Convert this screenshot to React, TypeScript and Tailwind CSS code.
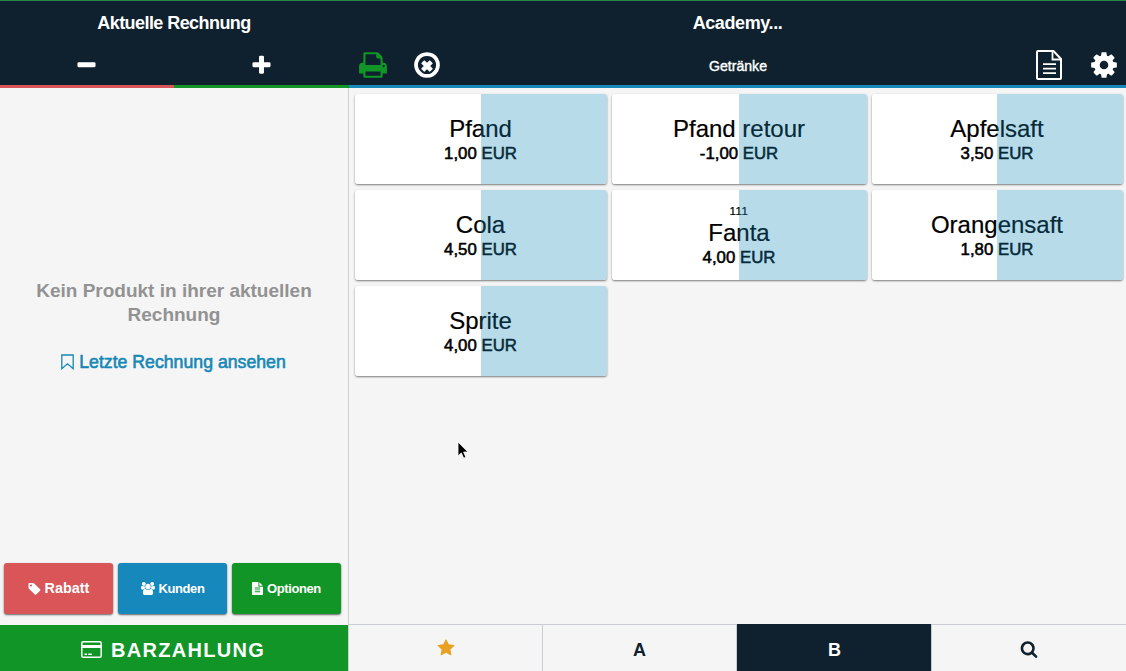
import React from 'react';

interface Product {
    id: number;
    name: string;
    price: string;
    code?: string;
}

const PRODUCTS: Product[] = [
    { id: 1, name: 'Pfand', price: '1,00 EUR' },
    { id: 2, name: 'Pfand retour', price: '-1,00 EUR' },
    { id: 3, name: 'Apfelsaft', price: '3,50 EUR' },
    { id: 4, name: 'Cola', price: '4,50 EUR' },
    { id: 5, name: 'Fanta', price: '4,00 EUR', code: '111' },
    { id: 6, name: 'Orangensaft', price: '1,80 EUR' },
    { id: 7, name: 'Sprite', price: '4,00 EUR' },
];

const PATHS = {
    minus: 'M1600 736v192q0 40-28 68t-68 28h-1216q-40 0-68-28t-28-68v-192q0-40 28-68t68-28h1216q40 0 68 28t28 68z',
    plus: 'M1600 736v192q0 40-28 68t-68 28h-416v416q0 40-28 68t-68 28h-192q-40 0-68-28t-28-68v-416h-416q-40 0-68-28t-28-68v-192q0-40 28-68t68-28h416v-416q0-40 28-68t68-28h192q40 0 68 28t28 68v416h416q40 0 68 28t28 68z',
    print: 'M448 1536h896v-256h-896v256zm0-640h896v-384h-160q-40 0-68-28t-28-68v-160h-640v640zm1152 64q0-26-19-45t-45-19-45 19-19 45 19 45 45 19 45-19 19-45zm128 0v416q0 13-9.5 22.5t-22.5 9.5h-224v160q0 40-28 68t-68 28h-960q-40 0-68-28t-28-68v-160h-224q-13 0-22.5-9.5t-9.5-22.5v-416q0-79 56.5-135.5t135.5-56.5h64v-544q0-40 28-68t68-28h672q40 0 88 20t76 48l152 152q28 28 48 76t20 88v256h64q79 0 135.5 56.5t56.5 135.5z',
    cancel: 'M1225 1143l-146 146q-10 10-23 10t-23-10l-137-137-137 137q-10 10-23 10t-23-10l-146-146q-10-10-10-23t10-23l137-137-137-137q-10-10-10-23t10-23l146-146q10-10 23-10t23 10l137 137 137-137q10-10 23-10t23 10l146 146q10 10 10 23t-10 23l-137 137 137 137q10 10 10 23t-10 23zm215-247q0-148-73-273t-198-198-273-73-273 73-198 198-73 273 73 273 198 198 273 73 273-73 198-198 73-273zm224 0q0 209-103 385.5t-279.5 279.5-385.5 103-385.5-103-279.5-279.5-103-385.5 103-385.5 279.5-279.5 385.5-103 385.5 103 279.5 279.5 103 385.5z',
    cog: 'M1152 896q0-106-75-181t-181-75-181 75-75 181 75 181 181 75 181-75 75-181zm512-109v222q0 12-8 23t-20 13l-185 28q-19 54-39 91 35 50 107 138 10 12 10 25t-9 23q-27 37-99 108t-94 71q-12 0-26-9l-138-108q-44 23-91 38-16 136-29 186-7 28-36 28h-222q-14 0-24.5-8.5t-11.5-21.5l-28-184q-49-16-90-37l-141 107q-10 9-25 9-14 0-25-11-126-114-165-168-7-10-7-23 0-12 8-23 15-21 51-66.5t54-70.5q-27-50-41-99l-183-27q-13-2-21-12.5t-8-23.5v-222q0-12 8-23t19-13l186-28q14-46 39-92-40-57-107-138-10-12-10-24 0-10 9-23 26-36 98.5-107.5t94.5-71.5q13 0 26 10l138 107q44-23 91-38 16-136 29-186 7-28 36-28h222q14 0 24.5 8.5t11.5 21.5l28 184q49 16 90 37l142-107q9-9 24-9 13 0 25 10 129 119 165 170 7 8 7 22 0 12-8 23-15 21-51 66.5t-54 70.5q26 50 41 98l183 28q13 2 21 12.5t8 23.5z',
    search: 'M1216 832q0-185-131.5-316.5t-316.5-131.5-316.5 131.5-131.5 316.5 131.5 316.5 316.5 131.5 316.5-131.5 131.5-316.5zm512 832q0 52-38 90t-90 38q-54 0-90-38l-343-342q-179 124-399 124-143 0-273.5-55.5t-225-150-150-225-55.5-273.5 55.5-273.5 150-225 225-150 273.5-55.5 273.5 55.5 225 150 150 225 55.5 273.5q0 220-124 399l343 343q37 37 37 90z',
    star: 'M1728 647q0 22-26 48l-363 354 86 500q1 7 1 20 0 21-10.5 35.5t-30.5 14.5q-19 0-40-12l-449-236-449 236q-22 12-40 12-21 0-31.5-14.5t-10.5-35.5q0-6 2-20l86-500-364-354q-25-27-25-48 0-37 56-46l502-73 225-455q19-41 49-41t49 41l225 455 502 73q56 9 56 46z',
    tag: 'M576 448q0-53-37.5-90.5t-90.5-37.5-90.5 37.5-37.5 90.5 37.5 90.5 90.5 37.5 90.5-37.5 37.5-90.5zm1067 576q0 53-37 90l-491 492q-39 37-91 37-53 0-90-37l-715-716q-38-37-64.5-101t-26.5-117v-416q0-52 38-90t90-38h416q53 0 117 26.5t102 64.5l715 714q37 39 37 91z',
    users: 'M657 896q-162 5-265 128h-134q-82 0-138-40.5t-56-118.5q0-353 124-353 6 0 43.5 21t97.5 42.5 119 21.5q67 0 133-23-5 37-5 66 0 139 81 256zm1071 637q0 120-73 189.5t-194 69.5h-874q-121 0-194-69.5t-73-189.5q0-53 3.5-103.5t14-109 26.5-108.5 43-97.5 62-81 85.5-53.5 111.5-20q10 0 43 21.5t73 48 107 48 135 21.5 135-21.5 107-48 73-48 43-21.5q61 0 111.5 20t85.5 53.5 62 81 43 97.5 26.5 108.5 14 109 3.5 103.5zm-1024-1277q0 106-75 181t-181 75-181-75-75-181 75-181 181-75 181 75 75 181zm704 384q0 159-112.5 271.5t-271.5 112.5-271.5-112.5-112.5-271.5 112.5-271.5 271.5-112.5 271.5 112.5 112.5 271.5zm576 225q0 78-56 118.5t-138 40.5h-134q-103-123-265-128 81-117 81-256 0-29-5-66 66 23 133 23 59 0 119-21.5t97.5-42.5 43.5-21q124 0 124 353zm-128-609q0 106-75 181t-181 75-181-75-75-181 75-181 181-75 181 75 75 181z',
    file: 'M1596 476q14 14 28 36h-472v-472q22 14 36 28zm-476 164h544v1056q0 40-28 68t-68 28h-1344q-40 0-68-28t-28-68v-1600q0-40 28-68t68-28h800v544q0 40 28 68t68 28zm160 736v-64q0-14-9-23t-23-9h-704q-14 0-23 9t-9 23v64q0 14 9 23t23 9h704q14 0 23-9t9-23zm0-256v-64q0-14-9-23t-23-9h-704q-14 0-23 9t-9 23v64q0 14 9 23t23 9h704q14 0 23-9t9-23zm0-256v-64q0-14-9-23t-23-9h-704q-14 0-23 9t-9 23v64q0 14 9 23t23 9h704q14 0 23-9t9-23z',
};

interface IconProps {
    name: keyof typeof PATHS;
    className?: string;
    viewBox?: string;
}

const Icon: React.FC<IconProps> = ({ name, className, viewBox = '0 0 1792 1792' }) => (
    <svg viewBox={viewBox} className={className} fill="currentColor" aria-hidden="true">
        <path d={PATHS[name]} />
    </svg>
);

const ReceiptIcon = () => (
    <svg width="28" height="32" viewBox="0 0 28 32" fill="none" stroke="currentColor" aria-hidden="true">
        <path d="M3 2h15.500l7.500 8v19a1 1 0 0 1-1 1H3a1 1 0 0 1-1-1V3a1 1 0 0 1 1-1z" strokeWidth="2" />
        <path d="M17.500 2v8.500H26" strokeWidth="1.800" />
        <path d="M8 15.200h13M8 19.700h13M8 24.200h13" strokeWidth="1.800" />
    </svg>
);

const BookmarkIcon = () => (
    <svg width="13" height="16" viewBox="0 0 13 16" fill="none" stroke="currentColor" strokeWidth="1.300" aria-hidden="true">
        <path d="M.8 1h11.400v13.700L6.500 9.800.8 14.700z" />
    </svg>
);

const CardIcon = () => (
    <svg width="21" height="17" viewBox="0 0 21 17" fill="none" stroke="currentColor" aria-hidden="true">
        <rect x=".8" y=".8" width="19.400" height="15.400" rx="1.500" strokeWidth="1.500" />
        <path d="M1 5.500h19" strokeWidth="3" />
        <path d="M3.500 13.300h2.500M7.200 13.300h3.600" strokeWidth="1.400" />
    </svg>
);

const ProductTile: React.FC<{ product: Product }> = ({ product }) => (
    <button className="relative flex flex-col items-center justify-center overflow-hidden rounded-[3px] bg-white pt-px pr-px text-black">
        {product.code && <span className="text-[11.5px] leading-[15px] tracking-[0.5px] [-webkit-text-stroke:0.2px]">{product.code}</span>}
        <span className="text-[24px] leading-[28px] [-webkit-text-stroke:0.2px]">{product.name}</span>
        <span className="text-[16.8px] leading-[21px] [-webkit-text-stroke:0.55px]">{product.price}</span>
        {/* stock level */}
        <span className="absolute inset-y-0 right-0 w-[calc(50%+0.4px)] bg-[#1488bb]/30" />
    </button>
);

export default function App() {
    return (
        <div className="relative flex h-[671px] w-[1126px] overflow-hidden bg-[#f5f5f5] font-['Liberation_Sans',Arial,sans-serif] text-[#0f212e]">
            {/* Current bill */}
            <aside className="flex w-[349px] flex-col">
                <header className="flex h-[88px] flex-col border-t border-[#2a8748] bg-[#0f212e] text-white">
                    <h1 className="h-11 pr-px text-center text-[18px] leading-[44px] font-bold tracking-[-0.57px]">Aktuelle Rechnung</h1>
                    <div className="flex flex-1">
                        <button className="flex w-[174px] items-center justify-center border-b-[3px] border-[#d95459] pr-px">
                            <Icon name="minus" className="h-[23px] w-[23px]" />
                        </button>
                        <button className="flex flex-1 items-center justify-center border-b-[3px] border-[#109526]">
                            <Icon name="plus" className="h-[23px] w-[23px]" />
                        </button>
                    </div>
                </header>

                <div className="flex flex-1 flex-col border-r border-[#cdd0d3]">
                    <div className="flex flex-1 flex-col items-center pt-[191px]">
                        <p className="w-[300px] text-center text-[19px] leading-6 font-bold text-[#929292]">Kein Produkt in ihrer aktuellen Rechnung</p>
                        <a className="mt-[23px] flex items-center gap-[5px] pr-px text-[17.7px] leading-6 text-[#1788b5] [-webkit-text-stroke:0.6px]">
                            <BookmarkIcon />
                            Letzte Rechnung ansehen
                        </a>
                    </div>
                    <div className="flex gap-[5px] px-1 pb-[11px] text-white">
                        <button className="flex h-[51px] w-[109px] items-center justify-center gap-1 rounded-[3px] bg-[#d95557] text-[14.4px] font-bold shadow-[0_1px_2px_rgba(0,0,0,0.6)]">
                            <Icon name="tag" className="h-[14px] w-[13px]" viewBox="64 0 1664 1792" />
                            Rabatt
                        </button>
                        <button className="flex h-[51px] w-[109px] items-center justify-center gap-1 rounded-[3px] bg-[#1788bb] text-[13px] font-bold tracking-[-0.4px] shadow-[0_1px_2px_rgba(0,0,0,0.6)]">
                            <Icon name="users" className="h-[13px] w-[14px]" viewBox="64 0 1920 1792" />
                            Kunden
                        </button>
                        <button className="flex h-[51px] w-[109px] items-center justify-center gap-1 rounded-[3px] bg-[#109526] text-[13px] font-bold tracking-[-0.4px] shadow-[0_1px_2px_rgba(0,0,0,0.6)]">
                            <Icon name="file" className="h-[13px] w-[11px]" viewBox="128 0 1536 1792" />
                            Optionen
                        </button>
                    </div>
                    <button className="flex h-[46px] items-center justify-center gap-[9px] bg-[#109526] pt-[3px] pr-[2px] text-[20px] font-bold tracking-[1.3px] text-white">
                        <CardIcon />
                        BARZAHLUNG
                    </button>
                </div>
            </aside>

            {/* Products */}
            <main className="flex flex-1 flex-col">
                <header className="flex h-[88px] flex-col border-t border-b-[3px] border-t-[#2a8748] border-b-[#1788bb] bg-[#0f212e] text-white">
                    <h2 className="h-11 text-center text-[18px] leading-[44px] font-bold tracking-[-0.4px]">Academy...</h2>
                    <div className="flex flex-1 items-center justify-between pr-[7px] pl-[9px]">
                        <div className="flex w-[100px] items-center gap-[24px]">
                            <Icon name="print" className="h-[30px] w-[30px] text-[#109526]" />
                            <Icon name="cancel" className="h-[30px] w-[30px]" />
                        </div>
                        <span className="pt-[3px] pr-px text-[14.1px] [-webkit-text-stroke:0.4px]">Getränke</span>
                        <div className="flex w-[100px] items-center justify-end gap-[26px]">
                            <ReceiptIcon />
                            <Icon name="cog" className="h-[30px] w-[30px]" />
                        </div>
                    </div>
                </header>

                <div className="grid flex-1 auto-rows-[90px] grid-cols-[252px_255px_251px] gap-x-[5px] gap-y-[6px] pt-[6px] pl-[6px]">
                    {PRODUCTS.map((product) => (
                        <div key={product.id} className="grid rounded-[3px] shadow-[0_1px_2px_rgba(0,0,0,0.5)]">
                            <ProductTile product={product} />
                        </div>
                    ))}
                </div>

                <nav className="flex h-[47px] border-t border-[#c9ccd0] text-[18px] font-bold">
                    <button className="flex w-[194px] items-center justify-center border-r border-[#c9ccd0]">
                        <Icon name="star" className="h-[18px] w-[18px] text-[#e9a122]" />
                    </button>
                    <button className="flex w-[194px] items-center justify-center border-r border-[#c9ccd0] pt-1">A</button>
                    <button className="-mt-px flex w-[194px] items-center justify-center bg-[#0f212e] pt-[5px] pl-px text-white">B</button>
                    <button className="flex flex-1 items-center justify-center border-l border-[#c9ccd0] pt-px">
                        <Icon name="search" className="h-[18px] w-[18px]" />
                    </button>
                </nav>
            </main>

            {/* Mouse pointer */}
            <svg className="absolute top-[441px] left-[457px]" width="12" height="19" viewBox="0 0 12 19" aria-hidden="true">
                <path d="M1 1v14l3.300-3.100 2.400 5.300 2.200-1-2.300-5.100H11z" fill="#000" stroke="#fff" strokeWidth=".8" />
            </svg>
        </div>
    );
}
